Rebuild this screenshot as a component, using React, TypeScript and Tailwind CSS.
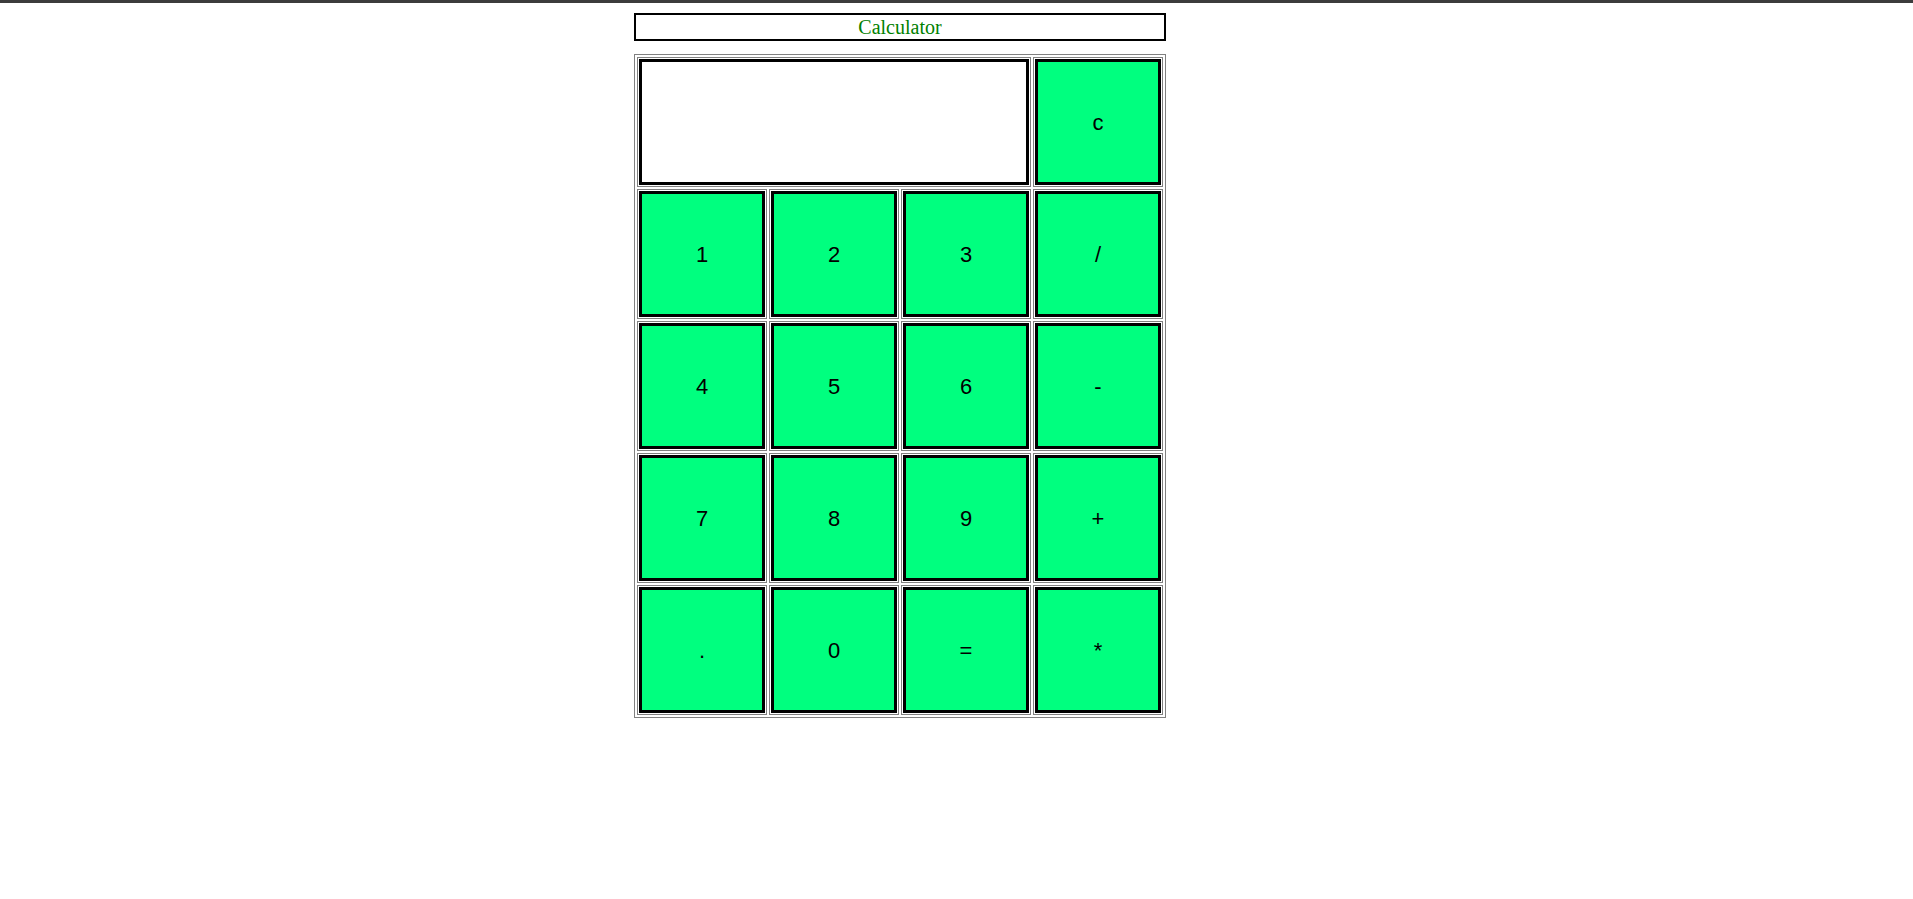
export default function App() {
  // button rows under the display
  const rows = [
    ["1", "2", "3", "/"],
    ["4", "5", "6", "-"],
    ["7", "8", "9", "+"],
    [".", "0", "=", "*"],
  ];

  const btn =
    "block w-[126px] h-[126px] border-[3px] border-black bg-[#00ff7f] text-[22px] text-black font-['Liberation_Sans',Arial,sans-serif]";
  const cell = "border border-[#808080] p-px";

  return (
    <div className="min-h-screen bg-white">
      <div className="h-[3px] bg-[#3c3c3c]" />
      <div className="ml-[634px] mt-[10px] w-[532px]">
        <div className="border-2 border-black text-center text-[20px] leading-[24px] text-[#008000] font-['Liberation_Serif','Times_New_Roman',serif]">
          Calculator
        </div>
        <table className="mt-[13px] border border-[#808080] border-separate border-spacing-[2px]">
          <tbody>
            <tr>
              <td colSpan={3} className={cell}>
                <input
                  type="text"
                  className="block w-[390px] h-[126px] border-[3px] border-black bg-white outline-none px-2 text-[22px] font-['Liberation_Sans',Arial,sans-serif]"
                />
              </td>
              <td className={cell}>
                <button className={btn}>c</button>
              </td>
            </tr>
            {rows.map((r, i) => (
              <tr key={i}>
                {r.map((k) => (
                  <td key={k} className={cell}>
                    <button className={btn}>{k}</button>
                  </td>
                ))}
              </tr>
            ))}
          </tbody>
        </table>
      </div>
    </div>
  );
}
